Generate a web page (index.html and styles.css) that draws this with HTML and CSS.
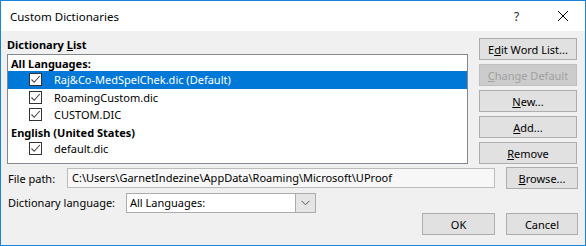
FILE: index.html
```html
<!DOCTYPE html>
<html>
<head>
<meta charset="utf-8">
<link rel="stylesheet" href="styles.css">
</head>
<body>
<div class="window">
  <div class="titlebar">
    <span class="title">Custom Dictionaries</span>
    <span class="help">?</span>
    <svg class="close" width="12" height="12" viewBox="0 0 12 12"><path d="M1 1 L11 11 M11 1 L1 11" stroke="#000" stroke-width="1" fill="none"/></svg>
  </div>
  <div class="content">
    <div class="top">
      <div class="leftcol">
        <div class="label bold">Dictionary <u>L</u>ist</div>
        <div class="listbox">
          <div class="group bold">All Languages:</div>
          <div class="row selected"><span class="cb"><svg width="11" height="11" viewBox="0 0 11 11"><path d="M1.5 5.5 L4.2 8.3 L9.8 2" stroke="#444" stroke-width="1.1" fill="none"/></svg></span><span>Raj&amp;Co-MedSpelChek.dic (Default)</span></div>
          <div class="row"><span class="cb"><svg width="11" height="11" viewBox="0 0 11 11"><path d="M1.5 5.5 L4.2 8.3 L9.8 2" stroke="#444" stroke-width="1.1" fill="none"/></svg></span><span>RoamingCustom.dic</span></div>
          <div class="row"><span class="cb"><svg width="11" height="11" viewBox="0 0 11 11"><path d="M1.5 5.5 L4.2 8.3 L9.8 2" stroke="#444" stroke-width="1.1" fill="none"/></svg></span><span>CUSTOM.DIC</span></div>
          <div class="group bold">English (United States)</div>
          <div class="row"><span class="cb"><svg width="11" height="11" viewBox="0 0 11 11"><path d="M1.5 5.5 L4.2 8.3 L9.8 2" stroke="#444" stroke-width="1.1" fill="none"/></svg></span><span>default.dic</span></div>
        </div>
      </div>
      <div class="buttons">
        <div class="btn">E<u>d</u>it Word List...</div>
        <div class="btn disabled"><u>C</u>hange Default</div>
        <div class="btn"><u>N</u>ew...</div>
        <div class="btn"><u>A</u>dd...</div>
        <div class="btn"><u>R</u>emove</div>
      </div>
    </div>
    <div class="pathrow">
      <span class="plabel">File path:</span>
      <div class="pathfield">C:\Users\GarnetIndezine\AppData\Roaming\Microsoft\UProof</div>
      <div class="btn small"><u>B</u>rowse...</div>
    </div>
    <div class="langrow">
      <span class="llabel">Dictionary lan<u>g</u>uage:</span>
      <div class="select">
        <span class="seltext">All Languages:</span>
        <span class="arrow"><svg width="9" height="6" viewBox="0 0 9 6"><path d="M0.5 0.8 L4.5 4.8 L8.5 0.8" stroke="#555" stroke-width="1" fill="none"/></svg></span>
      </div>
    </div>
    <div class="okrow">
      <div class="btn ok">OK</div>
      <div class="btn small">Cancel</div>
    </div>
  </div>
</div>
</body>
</html>
```
FILE: styles.css
```css
html, body {
  margin: 0;
  padding: 0;
  background: #f0f0f0;
}
body {
  font-family: "Noto Sans", "Open Sans", sans-serif;
  font-size: 11px;
  color: #000;
}
.window {
  width: 586px;
  height: 246px;
  box-sizing: border-box;
  border: 1px solid #1883d7;
  background: #f0f0f0;
  display: flex;
  flex-direction: column;
}
.titlebar {
  height: 30px;
  background: #fff;
  display: flex;
  align-items: center;
  flex-shrink: 0;
}
.title {
  margin-left: 9px;
  flex: 1;
  font-size: 11.5px;
}
.help {
  width: 12px;
  margin-right: 31px;
  font-size: 12px;
  color: #222;
}
.close {
  margin-right: 16px;
}
.content {
  padding: 7px 7px 0 6px;
  display: flex;
  flex-direction: column;
}
.top {
  display: flex;
  gap: 11px;
}
.leftcol {
  width: 461px;
  display: flex;
  flex-direction: column;
}
.label {
  height: 16px;
  line-height: 13px;
}
.bold {
  font-weight: bold;
}
.listbox {
  height: 110px;
  box-sizing: border-box;
  border: 1px solid #828790;
  background: #fff;
}
.group {
  height: 16px;
  line-height: 17px;
  padding-left: 3px;
}
.row {
  height: 17.5px;
  display: flex;
  align-items: center;
}
.row.selected {
  background: #0078d7;
  color: #fff;
}
.cb {
  width: 11px;
  height: 11px;
  border: 1px solid #333;
  background: #fff;
  margin-left: 21px;
  margin-right: 12px;
  display: flex;
}
.buttons {
  width: 98px;
  display: flex;
  flex-direction: column;
  gap: 4px;
}
.btn {
  height: 22px;
  box-sizing: border-box;
  border: 1px solid #adadad;
  background: #e1e1e1;
  display: flex;
  align-items: center;
  justify-content: center;
}
.btn.disabled {
  color: #a0a0a0;
  border-color: #bfbfbf;
  background: #cccccc;
}
.pathrow {
  display: flex;
  align-items: center;
  margin-top: 3px;
  height: 22px;
}
.plabel {
  width: 59px;
  padding-left: 1px;
}
.pathfield {
  width: 428px;
  height: 20px;
  box-sizing: border-box;
  border: 1px solid #bcbcbc;
  background: #f7f7f7;
  padding-left: 4px;
  line-height: 18px;
  margin-right: 11px;
}
.btn.small {
  width: 72px;
}
.langrow {
  display: flex;
  align-items: center;
  height: 21px;
  margin-top: 3px;
}
.llabel {
  width: 118px;
  padding-left: 1px;
}
.select {
  width: 190px;
  height: 20px;
  box-sizing: border-box;
  border: 1px solid #acacac;
  background: #fff;
  display: flex;
  align-items: center;
}
.seltext {
  flex: 1;
  padding-left: 3px;
}
.arrow {
  width: 19px;
  height: 18px;
  background: #e5e5e5;
  border-left: 1px solid #acacac;
  display: flex;
  align-items: center;
  justify-content: center;
}
.okrow {
  display: flex;
  justify-content: flex-end;
  gap: 11px;
}
.btn.ok {
  width: 73px;
}
```
